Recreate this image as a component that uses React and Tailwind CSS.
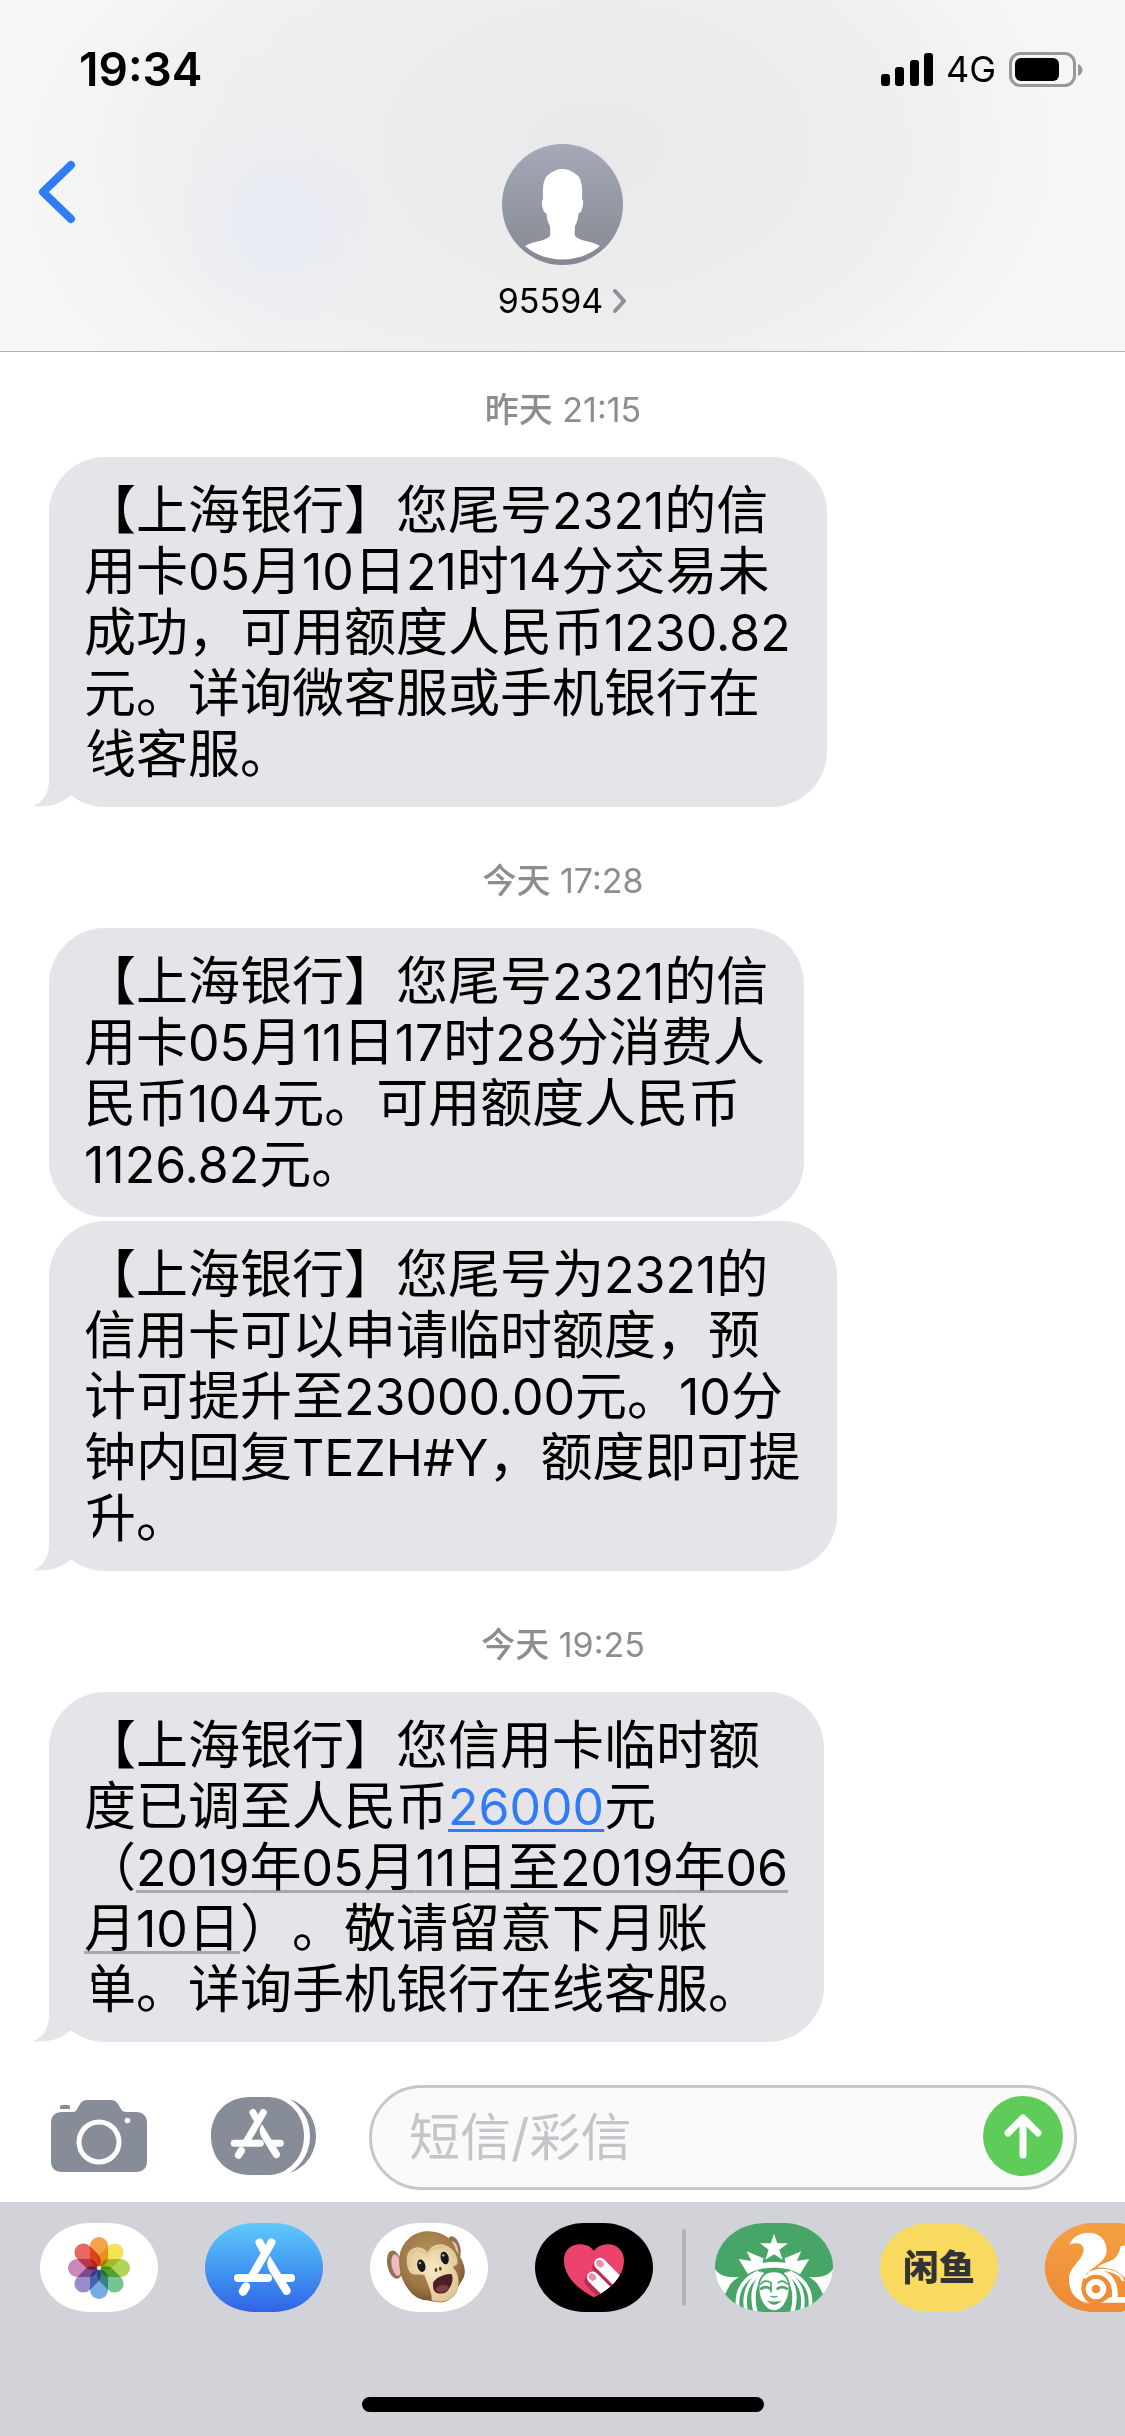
const THREAD = [
  {
    time: ["昨天", "21:15"],
    messages: [
      {
        tail: true,
        lines: [
          "【上海银行】您尾号2321的信",
          "用卡05月10日21时14分交易未",
          "成功，可用额度人民币1230.82",
          "元。详询微客服或手机银行在",
          "线客服。",
        ],
      },
    ],
  },
  {
    time: ["今天", "17:28"],
    messages: [
      {
        lines: [
          "【上海银行】您尾号2321的信",
          "用卡05月11日17时28分消费人",
          "民币104元。可用额度人民币",
          "1126.82元。",
        ],
      },
      {
        tail: true,
        lines: [
          "【上海银行】您尾号为2321的",
          "信用卡可以申请临时额度，预",
          "计可提升至23000.00元。10分",
          "钟内回复TEZH#Y，额度即可提",
          "升。",
        ],
      },
    ],
  },
  {
    time: ["今天", "19:25"],
    messages: [
      {
        tail: true,
        lines: [
          "【上海银行】您信用卡临时额",
          <>
            <Mixed text="度已调至人民币" />
            <a href="#amount" className="text-[#2f7cf6] underline decoration-[3px] underline-offset-4">
              <Mixed text="26000" />
            </a>
            元
          </>,
          <>
            （<DateLink>2019年05月11日至2019年06</DateLink>
          </>,
          <>
            <DateLink>月10日</DateLink>）。敬请留意下月账
          </>,
          "单。详询手机银行在线客服。",
        ],
      },
    ],
  },
];

// Latin runs are set a little smaller so they sit evenly beside the Chinese text
function Mixed({ text }) {
  return text.split(/([\x20-\x7e]+)/).map((part, i) =>
    i % 2 ? (
      <span key={i} className="text-[50px]">
        {part}
      </span>
    ) : (
      part
    )
  );
}

function DateLink({ children }) {
  return (
    <a
      href="#date"
      className="underline decoration-[#a9a9ad] decoration-[3px] underline-offset-4 [text-decoration-skip-ink:none]"
    >
      <Mixed text={children} />
    </a>
  );
}

function StatusBar() {
  return (
    <div className="flex items-center justify-between pt-[46px] pl-[79px] pr-[42px]">
      <span className="text-[46px] leading-[46px] font-semibold">19:34</span>
      <div className="flex items-center gap-[13px]">
        <svg className="w-[52px] h-[33px]" viewBox="0 0 52 33">
          <rect x="0" y="21" width="9" height="12" rx="3" />
          <rect x="14" y="14" width="9" height="19" rx="3" />
          <rect x="29" y="7" width="9" height="26" rx="3" />
          <rect x="43" y="0" width="9" height="33" rx="3" />
        </svg>
        <span className="text-[36px] leading-[46px]">4G</span>
        <svg className="w-[74px] h-[35px]" viewBox="0 0 74 35">
          <rect x="1.5" y="1.5" width="64" height="32" rx="10" fill="none" stroke="#98989a" strokeWidth="3" />
          <rect x="6" y="6" width="44" height="23" rx="6" />
          <path d="M69 12 C75 14 75 22 69 24 Z" fill="#98989a" />
        </svg>
      </div>
    </div>
  );
}

function Avatar() {
  return (
    <svg className="w-[121px] h-[121px]" viewBox="0 0 121 121">
      <defs>
        <linearGradient id="avatar" x1="0" y1="0" x2="0" y2="1">
          <stop offset="0" stopColor="#a5a9b8" />
          <stop offset="1" stopColor="#848991" />
        </linearGradient>
      </defs>
      <circle cx="60.5" cy="60.5" r="60.5" fill="url(#avatar)" />
      <path
        fill="#fff"
        d="M60.500 25 C67 25 71 28 75 31 C80 35 80.500 44 80 55 C82 57 81 63 79 68 C78 69 77 68 76.500 70 C76 75 75 79 73 82 C73 87 72 91 74 93 C80 98 91 97 98 102 C88 111 74 115.500 60.500 115.500 C47 115.500 33 111 23 102 C30 97 41 98 47 93 C49 91 48 87 48 82 C46 79 45 75 44.500 70 C44 68 43 69 42 68 C40 63 39 57 41 55 C40.500 44 41 35 46 31 C50 28 54 25 60.500 25 Z"
      />
    </svg>
  );
}

function Header() {
  return (
    <header className="border-b border-[#b2b2b4] bg-[#f8f8f8] bg-[radial-gradient(circle_at_25%_64%,#e6eaf4_0%,transparent_12%),radial-gradient(ellipse_46%_100%_at_53%_42%,#e9e9eb_0%,#ededee_50%,transparent_100%),radial-gradient(ellipse_32%_95%_at_25%_50%,#eeeff1_0%,transparent_100%)]">
      <StatusBar />
      <div className="grid grid-cols-[1fr_auto_1fr] items-start pt-[52px] pb-[28px]">
        <button aria-label="返回" className="justify-self-start pl-[37px] pt-4">
          <svg className="w-10 h-16" viewBox="0 0 40 64">
            <path d="M34 5 L6 32 L34 59" fill="none" stroke="#2f7cf6" strokeWidth="8" strokeLinecap="round" strokeLinejoin="round" />
          </svg>
        </button>
        <button className="flex flex-col items-center">
          <Avatar />
          <span className="mt-[14px] flex items-center gap-[10px] text-[34px] leading-[44px]">
            95594
            <svg className="w-[14px] h-[24px]" viewBox="0 0 14 24">
              <path d="M2 2 L11 12 L2 22" fill="none" stroke="#8b9099" strokeWidth="4" strokeLinecap="round" strokeLinejoin="round" />
            </svg>
          </span>
        </button>
      </div>
    </header>
  );
}

function Bubble({ lines, tail }) {
  return (
    <div className="relative w-fit rounded-[56px] bg-[#e5e4e9] pl-[35px] pr-9 pt-[23px] pb-[22px] text-[52px] leading-[61px] whitespace-nowrap">
      {lines.map((line, i) => (
        <p key={i} className="h-[61px]">
          {typeof line === "string" ? <Mixed text={line} /> : line}
        </p>
      ))}
      {tail && (
        <svg className="absolute bottom-0 -left-4 w-15 h-15" viewBox="0 0 60 60">
          <path d="M16 0 V33 C16 47 9 56 0 59 C14 61 28 57 37 49 L60 40 V0 Z" fill="#e5e4e9" />
        </svg>
      )}
    </div>
  );
}

// The "A" of crossed sticks, drawn in a 118x89 box
function StoreSticks() {
  return (
    <g fill="none" stroke="#fff" strokeWidth="8" strokeLinecap="round">
      <path d="M66.500 19.500 L47 53" />
      <path d="M54.500 19.500 L58 26" />
      <path d="M33 55 H63" />
      <path d="M77 55 H86" />
      <path d="M41 63.500 L38 68.500" strokeWidth="8.500" />
      <path d="M65 33 C61 38 62 44 65 49 L78 70 C81 75 88 70 85 65.500 Z" fill="#fff" stroke="none" />
    </g>
  );
}

function CameraIcon() {
  return (
    <svg className="w-24 h-[72px]" viewBox="0 0 96 72">
      <path
        fill="#868d98"
        d="M11 12 H22 C28 12 27 0 36 0 H60 C69 0 68 12 75 12 H85 C92 12 96 16 96 23 V61 C96 68 92 72 85 72 H11 C4 72 0 68 0 61 V23 C0 16 4 12 11 12 Z"
      />
      <path fill="#868d98" d="M9 9 V7 Q9 5 11 5 H17 Q19 5 19 7 V9 Z" />
      <circle cx="48" cy="42" r="20" fill="none" stroke="#fff" strokeWidth="5" />
      <circle cx="76.500" cy="20.500" r="2.800" fill="#fff" />
    </svg>
  );
}

function AppsIcon() {
  return (
    <svg className="w-[105px] h-[78px]" viewBox="0 0 105 78">
      <path fill="#868d98" d="M79 2 C95 8 105 22 105 39 C105 56 95 70 79 76 C92 67 99 54 99 39 C99 24 92 11 79 2 Z" />
      <path fill="#868d98" d="M39 0 H55 C64 0 71 2 76 6 C87 13 93 25 93 39 C93 53 87 65 76 72 C71 76 64 78 55 78 H39 C16 78 0 62 0 39 C0 16 16 0 39 0 Z" />
      <g transform="translate(-5.500 -1.500) scale(.87)">
        <StoreSticks />
      </g>
    </svg>
  );
}

const PETALS = ["#f19a38", "#f2e043", "#a5d046", "#67bd8a", "#68a3de", "#8f80c4", "#c77bb0", "#e6564f"];

function PhotosArt() {
  return (
    <g transform="translate(59 45)">
      {PETALS.map((color, i) => (
        <rect
          key={color}
          x="-9"
          y="-31"
          width="18"
          height="30"
          rx="9"
          fill={color}
          transform={`rotate(${i * 45})`}
          className="mix-blend-multiply opacity-90"
        />
      ))}
      <circle r="2" fill="#fff" />
    </g>
  );
}

function MonkeyArt() {
  return (
    <g>
      <defs>
        <radialGradient id="fur" cx="45%" cy="35%" r="65%">
          <stop offset="0" stopColor="#b8935c" />
          <stop offset="0.7" stopColor="#9c7646" />
          <stop offset="1" stopColor="#775431" />
        </radialGradient>
        <radialGradient id="skin" cx="50%" cy="45%" r="60%">
          <stop offset="0" stopColor="#f8e8c2" />
          <stop offset="1" stopColor="#e0c595" />
        </radialGradient>
      </defs>
      <ellipse cx="104" cy="165" rx="22" ry="43" fill="#8d7351" transform="rotate(-12 104 165)" />
      <ellipse cx="109" cy="166" rx="14" ry="33" fill="#f3b9c3" transform="rotate(-10 109 166)" />
      <ellipse cx="282" cy="116" rx="19" ry="37" fill="#8d7351" transform="rotate(-14 282 116)" />
      <ellipse cx="283" cy="120" rx="11" ry="26" fill="#f3b9c3" transform="rotate(-14 283 120)" />
      <path
        fill="url(#fur)"
        d="M205 65 C250 66 280 88 288 122 C300 140 317 165 314 192 C311 212 296 222 292 240 C285 262 262 278 240 278 C225 277 212 274 200 272 C165 270 140 240 126 205 C112 160 113 120 143 90 C163 70 185 65 205 65 Z"
      />
      <path
        fill="url(#skin)"
        d="M148 124 C165 106 192 110 203 130 C210 108 238 98 260 108 C285 120 295 142 292 164 L278 172 C296 190 299 215 292 240 C284 262 262 276 240 276 C228 276 219 274 215 272 C216 248 204 226 193 196 C182 192 172 196 160 194 C139 188 134 142 148 124 Z"
      />
      <path d="M152 130 Q175 112 200 134 Q215 112 252 112" fill="none" stroke="#dfc28c" strokeWidth="5" />
      <ellipse cx="184" cy="168" rx="12" ry="19" fill="#151719" transform="rotate(-14 184 168)" />
      <ellipse cx="254" cy="145" rx="12" ry="19" fill="#151719" transform="rotate(-14 254 145)" />
      <circle cx="180" cy="160" r="4" fill="#9faab0" />
      <circle cx="250" cy="137" r="4" fill="#9faab0" />
      <ellipse cx="228" cy="181" rx="4" ry="6" fill="#5e3b23" />
      <ellipse cx="241" cy="177" rx="4" ry="6" fill="#5e3b23" />
      <path d="M220 218 C230 202 260 190 275 194 C283 208 272 236 258 248 C244 255 226 252 221 240 C219 232 218 225 220 218 Z" fill="#4b2023" />
      <path d="M226 240 C234 224 256 220 266 232 C262 246 240 256 226 240 Z" fill="#7d4145" />
    </g>
  );
}

function HeartArt() {
  const heart =
    "M702 263 C660 242 612 205 612 152 C612 120 635 104 658 104 C678 104 694 112 702 124 C710 112 726 104 746 104 C772 104 792 125 792 152 C792 205 744 242 702 263 Z";
  return (
    <g>
      <clipPath id="heart">
        <path d={heart} />
      </clipPath>
      <path d={heart} fill="#ec436d" />
      <g clipPath="url(#heart)" strokeLinecap="round">
        <path d="M714 172 L790 248 M690 214 L750 274" stroke="#b92d50" strokeWidth="35" />
        <path d="M720 162 L790 232 M698 203 L764 269" stroke="#fff" strokeWidth="35" />
      </g>
      <ellipse cx="720" cy="162" rx="10" ry="12" fill="#f48aa7" transform="rotate(-45 720 162)" />
      <ellipse cx="697" cy="202" rx="10" ry="12" fill="#f48aa7" transform="rotate(-45 697 202)" />
    </g>
  );
}

function SirenHalf() {
  return (
    <g>
      <path d="M252 157 C238 157 228 158 218 160 L220 146 L170 125 L184 154 L146 148 L174 194 C195 180 220 174 252 174 Z" fill="#fff" />
      <path d="M70 168 C80 195 105 206 148 202 C125 213 118 228 106 252 L70 240 Z" fill="#fff" />
      <path d="M206 187 C155 210 130 250 148 320" fill="none" stroke="#fff" strokeWidth="11" />
      <path d="M214 189 C172 215 155 260 172 320" fill="none" stroke="#fff" strokeWidth="11" />
      <path d="M222 191 C194 215 180 255 200 320" fill="none" stroke="#fff" strokeWidth="13" />
    </g>
  );
}

function SirenArt() {
  return (
    <g>
      <SirenHalf />
      <g transform="translate(504 0) scale(-1 1)">
        <SirenHalf />
      </g>
      <path d="M252 72 L262 101 L294 101 L268 120 L278 150 L252 134 L226 150 L236 120 L210 101 L242 101 Z" fill="#fff" />
      <path d="M230 155 L252 142 L274 155 Z" fill="#47a568" />
      <path
        d="M252 185 C282 185 298 206 298 236 C298 274 276 304 252 304 C228 304 206 274 206 236 C206 206 222 185 252 185 Z"
        fill="#fff"
        stroke="#47a568"
        strokeWidth="5"
      />
      <g fill="none" stroke="#47a568" strokeLinecap="round">
        <path d="M212 223 Q226 208 243 219 L243 246" strokeWidth="5" />
        <path d="M292 223 Q278 208 265 219" strokeWidth="5" />
        <path d="M214 237 Q227 228 241 237" strokeWidth="8" />
        <path d="M263 237 Q277 228 290 237" strokeWidth="8" />
        <path d="M243 260 Q252 264 261 260" strokeWidth="4" />
        <path d="M238 277 Q252 290 267 277 Q252 280 238 277 Z" strokeWidth="4" fill="#47a568" />
      </g>
    </g>
  );
}

function SquirrelArt() {
  return (
    <g>
      <defs>
        <linearGradient id="browser" x1="0" y1="0" x2="0" y2="1">
          <stop offset="0" stopColor="#f4a043" />
          <stop offset="1" stopColor="#ee8934" />
        </linearGradient>
      </defs>
      <rect x="1065" y="40" width="354" height="267" fill="url(#browser)" />
      <path
        fill="#fff"
        d="M1137 105 C1148 80 1172 68 1200 69 C1232 71 1250 94 1250 122 C1250 155 1212 170 1192 190 C1166 216 1170 258 1196 278 C1160 278 1136 248 1137 207 C1138 170 1182 150 1181 118 C1179 99 1158 97 1137 105 Z"
      />
      <path fill="#fff" d="M1250 158 C1275 150 1286 140 1292 110 L1330 100 V220 C1312 216 1300 196 1278 184 C1262 176 1240 172 1222 174 Q1232 164 1250 158 Z" />
      <path d="M1186 208 C1230 166 1282 200 1274 268" fill="none" stroke="#fff" strokeWidth="17" />
      <path d="M1196 190 C1240 170 1290 186 1300 214" fill="none" stroke="#fff" strokeWidth="7" />
      <circle cx="1218" cy="238" r="43" fill="#ef8d37" />
      <circle cx="1218" cy="238" r="22" fill="none" stroke="#fff" strokeWidth="18" />
      <path d="M1176 279 C1200 284 1240 276 1262 262 H1320 V279 Z" fill="#fff" />
      <path d="M1188 266 Q1218 290 1248 266" fill="none" stroke="#ef8d37" strokeWidth="7" />
    </g>
  );
}

const PILL = "block w-[118px] h-[89px] shrink-0 overflow-hidden rounded-[50px/45px]";

function AppPill({ label, bg, viewBox, children }) {
  return (
    <button aria-label={label} className={`${PILL} ${bg}`}>
      <svg className="w-full h-full" viewBox={viewBox}>
        {children}
      </svg>
    </button>
  );
}

function AppStrip() {
  return (
    <div className="flex items-center gap-[47px] overflow-hidden pl-10 pt-[21px]">
      <AppPill label="照片" bg="bg-white" viewBox="0 0 118 89">
        <PhotosArt />
      </AppPill>
      <AppPill label="App Store" bg="bg-gradient-to-b from-[#5fcaf9] to-[#3262e6]" viewBox="0 0 118 89">
        <StoreSticks />
      </AppPill>
      <AppPill label="拟我表情" bg="bg-white" viewBox="30 40 354 267">
        <MonkeyArt />
      </AppPill>
      <div className="flex shrink-0 items-center gap-[29px]">
        <AppPill label="Digital Touch" bg="bg-black" viewBox="525 40 354 267">
          <HeartArt />
        </AppPill>
        <span className="w-1 h-[77px] rounded-full bg-[#b2b3b8]" />
        <AppPill label="星巴克" bg="bg-[#47a568]" viewBox="75 40 354 267">
          <SirenArt />
        </AppPill>
      </div>
      <button className={`${PILL} bg-[#f9da60] text-center text-[36px] leading-[86px] font-black text-[#333]`}>闲鱼</button>
      <AppPill label="UC浏览器" bg="bg-[#f09539]" viewBox="1065 40 354 267">
        <SquirrelArt />
      </AppPill>
    </div>
  );
}

function Composer() {
  return (
    <form className="flex items-center pl-[51px] pr-12 pb-3" onSubmit={(e) => e.preventDefault()}>
      <button type="button" aria-label="相机" className="mb-[3px] shrink-0">
        <CameraIcon />
      </button>
      <button type="button" aria-label="应用" className="mb-[3px] ml-16 shrink-0">
        <AppsIcon />
      </button>
      <div className="ml-[53px] flex h-[105px] min-w-0 flex-1 items-center rounded-full border-[3px] border-[#c6c6cb] bg-[#fafafa] pl-[37px] pr-[11px]">
        <input
          aria-label="短信/彩信"
          placeholder="短信/彩信"
          className="min-w-0 flex-1 bg-transparent text-[51px] leading-[61px] outline-none placeholder:text-[#c4c4c9]"
        />
        <button aria-label="发送" className="mb-[3px] flex size-20 shrink-0 items-center justify-center rounded-full bg-[#5fcc5a]">
          <svg className="w-10 h-12" viewBox="0 0 40 48">
            <path d="M20 43 V7 M5 21 L20 6 L35 21" fill="none" stroke="#fff" strokeWidth="7" strokeLinecap="round" strokeLinejoin="round" />
          </svg>
        </button>
      </div>
    </form>
  );
}

export default function App() {
  return (
    <div
      lang="zh-CN"
      className="flex min-h-screen flex-col overflow-hidden bg-white text-black font-['Inter','Noto_Sans_CJK_SC',sans-serif] [text-spacing-trim:space-all]"
    >
      <Header />
      <main className="flex-1 pl-[49px] pr-12 pt-[37px] pb-[41px]">
        {THREAD.map((group) => (
          <section key={group.time[1]} className="mb-[53px] last:mb-0">
            <h2 className="mb-[27px] text-center text-[34px] leading-[41px] text-[#8c8c91]">
              <span className="font-medium">{group.time[0]}</span> {group.time[1]}
            </h2>
            <div className="flex flex-col gap-1">
              {group.messages.map((message, i) => (
                <Bubble key={i} {...message} />
              ))}
            </div>
          </section>
        ))}
      </main>
      <Composer />
      <footer className="bg-[#d1d3d9] pb-6">
        <AppStrip />
        <div className="mx-auto mt-[85px] h-[15px] w-[402px] rounded-full bg-black" />
      </footer>
    </div>
  );
}
